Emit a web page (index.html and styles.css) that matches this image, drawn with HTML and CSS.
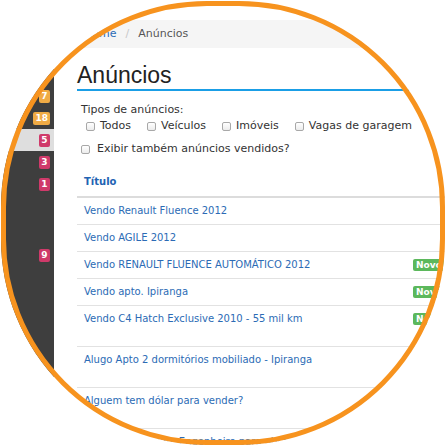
FILE: index.html
```html
<!DOCTYPE html>
<html lang="pt-BR">
<head>
<meta charset="utf-8">
<title>Anúncios</title>
<link rel="stylesheet" href="styles.css">
</head>
<body>
<div class="frame">
  <div class="page">
    <aside class="sidebar">
      <div class="side-item"><span class="badge warn">7</span></div>
      <div class="side-item"><span class="badge warn">18</span></div>
      <div class="side-item active"><span class="badge danger">5</span></div>
      <div class="side-item"><span class="badge danger">3</span></div>
      <div class="side-item"><span class="badge danger">1</span></div>
      <div class="side-item"></div>
      <div class="side-item"></div>
      <div class="side-item gap"><span class="badge danger">9</span></div>
    </aside>
    <main class="content">
      <nav class="breadcrumb">
        <a href="#" class="crumb-link">Home</a><span class="sep">/</span><span class="crumb-active">Anúncios</span>
      </nav>
      <h1 class="title">Anúncios</h1>
      <div class="filters">
        <div class="filter-title">Tipos de anúncios:</div>
        <div class="types">
          <label class="check"><input type="checkbox"><span>Todos</span></label>
          <label class="check"><input type="checkbox"><span>Veículos</span></label>
          <label class="check"><input type="checkbox"><span>Imóveis</span></label>
          <label class="check"><input type="checkbox"><span>Vagas de garagem</span></label>
        </div>
        <label class="check sold"><input type="checkbox"><span>Exibir também anúncios vendidos?</span></label>
      </div>
      <div class="list">
        <div class="row head"><span>Título</span><span></span></div>
        <div class="row"><a href="#">Vendo Renault Fluence 2012</a><span></span></div>
        <div class="row"><a href="#">Vendo AGILE 2012</a><span></span></div>
        <div class="row"><a href="#">Vendo RENAULT FLUENCE AUTOMÁTICO 2012</a><span class="label">Novo</span></div>
        <div class="row"><a href="#">Vendo apto. Ipiranga</a><span class="label">Novo</span></div>
        <div class="row tall"><a href="#">Vendo C4 Hatch Exclusive 2010 - 55 mil km</a><span class="label">Novo</span></div>
        <div class="row tall"><a href="#">Alugo Apto 2 dormitórios mobiliado - Ipiranga</a><span></span></div>
        <div class="row tall"><a href="#">Alguem tem dólar para vender?</a><span></span></div>
        <div class="row tall"><a href="#">Vaga de emprego: Engenheiro para obra</a><span></span></div>
      </div>
    </main>
  </div>
  <div class="lens"></div>
</div>
</body>
</html>
```
FILE: styles.css
```css
html, body {
  margin: 0;
  padding: 0;
  background: #fff;
}

.frame {
  position: relative;
  width: 447px;
  height: 447px;
  overflow: hidden;
  background: #fff;
  font-family: "DejaVu Sans", Verdana, sans-serif;
  color: #333;
}

.page {
  display: grid;
  grid-template-columns: 54px 480px;
  column-gap: 23px;
  width: 557px;
  height: 447px;
}

/* Sidebar */
.sidebar {
  background: #3e3e3e;
  padding-top: 85px;
  display: flex;
  flex-direction: column;
}

.side-item {
  height: 22px;
  display: flex;
  align-items: center;
  justify-content: flex-end;
  padding-right: 4px;
}

.side-item.active {
  background: #dedede;
}

.side-item.gap {
  margin-top: 5px;
}

.badge {
  box-sizing: border-box;
  min-width: 11px;
  height: 13px;
  line-height: 13px;
  padding: 0 2px;
  border-radius: 2px;
  font-size: 9px;
  font-weight: bold;
  color: #fff;
  text-align: center;
}

.badge.warn { background: #f0ab45; }
.badge.danger { background: #cf3a6a; }

/* Content */
.content {
  padding-top: 20px;
}

.breadcrumb {
  height: 28px;
  line-height: 28px;
  background: #f5f5f5;
  padding: 0 7px;
  font-size: 11px;
  border-radius: 4px;
}

.crumb-link {
  color: #2b6bb5;
  text-decoration: none;
}

.sep {
  color: #c8c8c8;
  margin: 0 9px;
}

.crumb-active {
  color: #555;
}

.title {
  margin: 13px 0 0;
  font-family: "Liberation Sans", Arial, sans-serif;
  font-weight: normal;
  font-size: 23px;
  line-height: 28px;
  color: #222;
  border-bottom: 2px solid #1a9ee6;
}

.filters {
  padding-left: 4px;
  font-size: 11px;
}

.filter-title {
  margin-top: 12px;
  line-height: 14px;
}

.types {
  display: flex;
  gap: 16px;
  padding-left: 5px;
  margin-top: 1px;
}

.check {
  display: flex;
  align-items: center;
  gap: 5px;
  height: 16px;
  line-height: 14px;
}

.check input {
  appearance: none;
  -webkit-appearance: none;
  margin: 0;
  box-sizing: border-box;
  width: 9px;
  height: 9px;
  border: 1px solid #a8a8a8;
  border-radius: 2px;
  background: linear-gradient(#fff, #ececec);
}

.check.sold {
  margin-top: 7px;
  gap: 7px;
}

/* List */
.list {
  margin-top: 11px;
  font-size: 10px;
}

.row {
  display: grid;
  grid-template-columns: 329px auto;
  align-items: center;
  padding: 7px 7px;
  line-height: 12px;
  border-bottom: 1px solid #e2e2e2;
}

.row.tall {
  align-items: start;
  padding-bottom: 21px;
}

.row.head {
  padding: 8px 7px;
  border-bottom: 2px solid #dcdcdc;
  font-weight: bold;
  color: #2263b3;
}

.row a {
  color: #2b6bb5;
  text-decoration: none;
}

.label {
  justify-self: start;
  background: #5cb85c;
  color: #fff;
  font-size: 9px;
  font-weight: bold;
  line-height: 12px;
  padding: 0 3px;
  border-radius: 2px;
}

/* Circular lens overlay */
.lens {
  position: absolute;
  left: 1px;
  top: 1px;
  width: 444px;
  height: 444px;
  box-sizing: border-box;
  border: 5px solid #f7931e;
  border-radius: 206px;
  box-shadow: 0 0 0 400px #fff;
  pointer-events: none;
}
```
